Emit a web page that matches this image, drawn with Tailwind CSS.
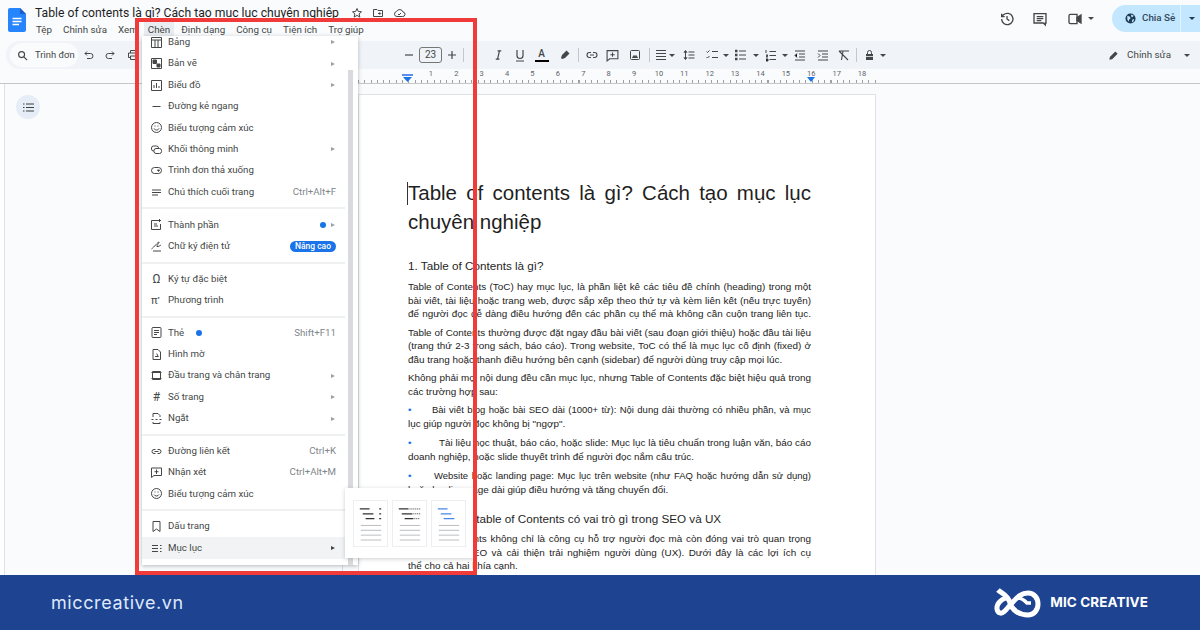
<!DOCTYPE html>
<html lang="vi">
<head>
<meta charset="utf-8">
<title>Table of contents</title>
<script src="https://cdn.jsdelivr.net/npm/@tailwindcss/browser@4"></script>
</head>
<body class="m-0">
<div class="relative w-[1200px] h-[630px] overflow-hidden flex flex-col bg-[#f9fbfd] font-['Roboto','Liberation_Sans',sans-serif] text-[#444746]">

  <!-- Header -->
  <div class="h-[41px] flex items-start shrink-0">
    <svg class="w-[18px] h-[24px] ml-[8px] mt-[8px] shrink-0" viewBox="0 0 18 24"><path d="M2 0h10l6 6v16a2 2 0 0 1-2 2H2a2 2 0 0 1-2-2V2a2 2 0 0 1 2-2z" fill="#2684fc"/><path d="M12 0l6 6h-6z" fill="#1a5fc4"/><path d="M4.500 10.500h9M4.500 13.500h9M4.500 16.500h6.500" stroke="#fff" stroke-width="1.300"/></svg>
    <div class="ml-[9px] mt-[4px]">
      <div class="flex items-center h-[18px]">
        <span class="text-[12.200px] leading-[18px] text-[#1f1f1f] whitespace-nowrap">Table of contents là gì? Cách tạo mục lục chuyên nghiệp</span>
        <svg class="w-[12px] h-[12px] ml-[12px]" viewBox="0 0 24 24" fill="none" stroke="#444746" stroke-width="2"><path d="M12 3l2.700 6 6.300.6-4.800 4.200 1.500 6.400L12 16.800 6.300 20.200l1.500-6.400L3 9.600 9.300 9z"/></svg>
        <svg class="w-[12px] h-[12px] ml-[9px]" viewBox="0 0 24 24" fill="none" stroke="#444746" stroke-width="2"><path d="M3 5h7l2 2h9v12H3zM12 13h5M15 10.500l2.500 2.500-2.500 2.500"/></svg>
        <svg class="w-[13px] h-[12px] ml-[9px]" viewBox="0 0 24 24" fill="none" stroke="#444746" stroke-width="2"><path d="M7 19a5 5 0 0 1-1-9.900A7 7 0 0 1 19 10a4.500 4.500 0 0 1-1 9zM9 14l2 2 4-4"/></svg>
      </div>
      <div class="flex text-[9.800px] leading-[14px] mt-[1px] whitespace-nowrap">
        <span class="ml-[1px]">Tệp</span>
        <span class="ml-[11px]">Chỉnh sửa</span>
        <span class="ml-[11px]">Xem</span>
        <span class="ml-[6px] px-[4px] -my-[2px] py-[2px] bg-[#e9ecf0]">Chèn</span>
        <span class="ml-[7px]">Định dạng</span>
        <span class="ml-[11px]">Công cụ</span>
        <span class="ml-[11px]">Tiện ích</span>
        <span class="ml-[11px]">Trợ giúp</span>
      </div>
    </div>
    <div class="ml-auto flex items-center mt-[5px] mr-0">
      <svg class="w-[16px] h-[16px]" viewBox="0 0 24 24" fill="none" stroke="#444746" stroke-width="2"><path d="M4 12a8.500 8.500 0 1 0 2.800-6.300L4 8.300M4 4v4.500h4.500M12 7.500V12l3.500 2.500"/></svg>
      <svg class="w-[16px] h-[16px] ml-[17px]" viewBox="0 0 24 24" fill="none" stroke="#444746" stroke-width="2"><path d="M3 4h18v14h-1v3l-3-3H3zM7 8.500h10M7 11.500h10M7 14.500h7"/></svg>
      <svg class="w-[16px] h-[16px] ml-[19px]" viewBox="0 0 24 24" fill="none" stroke="#444746" stroke-width="2"><path d="M3 7a2 2 0 0 1 2-2h10v14H5a2 2 0 0 1-2-2z"/><path d="M15 10l6-4v12l-6-4z" fill="#444746"/></svg>
      <span class="ml-[5px] border-x-[3px] border-t-[3px] border-x-transparent border-t-[#444746]"></span>
      <div class="ml-[18px] w-[88px] h-[27px] rounded-l-full bg-[#c2e7ff] flex items-center pl-[13px] text-[9.800px] font-medium text-[#33475b]">
        <svg class="w-[11px] h-[11px] mr-[6px]" viewBox="0 0 24 24"><circle cx="12" cy="12" r="11" fill="#1f3a52"/><path d="M5 6l6 2 1 4-3 2-1 5-3-5zM14 3l5 3-3 3-3-2zM16 14l4-1-2 6-3 1z" fill="#c2e7ff"/></svg>
        Chia Sẻ
        <span class="ml-auto w-px h-full bg-[#e3f3ff]"></span>
        <span class="ml-[8px] mr-[5px] border-x-[3px] border-t-[3px] border-x-transparent border-t-[#1f3a52]"></span>
      </div>
    </div>
  </div>

  <!-- Toolbar -->
  <div class="h-[28px] ml-[6px] shrink-0 flex items-center bg-[#f0f4f9] rounded-l-full text-[#444746]">
    <div class="w-[68px] h-[24px] ml-[4px] rounded-full bg-[#f9fbfd] flex items-center pl-[7px] text-[9.400px] whitespace-nowrap">
      <svg class="w-[11px] h-[11px] mr-[7px] shrink-0" viewBox="0 0 24 24" fill="none" stroke="#444746" stroke-width="2.500"><circle cx="10" cy="10" r="6.500"/><path d="M15 15l7 7"/></svg>
      Trình đơn
    </div>
    <svg class="w-[12px] h-[12px] ml-[5px]" viewBox="0 0 24 24" fill="none" stroke="#444746" stroke-width="2"><path d="M4 9h11a5 5 0 0 1 0 10H8M8 5L4 9l4 4"/></svg>
    <svg class="w-[12px] h-[12px] ml-[9px]" viewBox="0 0 24 24" fill="none" stroke="#444746" stroke-width="2"><path d="M20 9H9a5 5 0 0 0 0 10h7M16 5l4 4-4 4"/></svg>
    <svg class="w-[12px] h-[12px] ml-[11px]" viewBox="0 0 24 24" fill="none" stroke="#444746" stroke-width="2"><path d="M7 8V3h10v5M7 17H3V8h18v9h-4M7 14h10v7H7z"/></svg>
    <div class="ml-[265px] flex items-center">
      <svg class="w-[10px] h-[10px]" viewBox="0 0 10 10"><path d="M1 5h8" stroke="#444746" stroke-width="1.200"/></svg>
      <div class="w-[23px] h-[16px] ml-[5px] rounded-[3px] border border-[#747775] text-[10px] leading-[14px] text-center">23</div>
      <svg class="w-[10px] h-[10px] ml-[5px]" viewBox="0 0 10 10"><path d="M1 5h8M5 1v8" stroke="#444746" stroke-width="1.200"/></svg>
      <span class="ml-[6px] w-px h-[14px] bg-[#c7c7c7]"></span>
      <svg class="w-[11px] h-[12px] ml-[29px]" viewBox="0 0 24 24"><path d="M10 3h8M14 3L10 21M6 21h8" stroke="#444746" stroke-width="2.600" fill="none"/></svg>
      <svg class="w-[12px] h-[13px] ml-[9.500px]" viewBox="0 0 24 26" fill="none" stroke="#444746" stroke-width="2.400"><path d="M6 2v11a6 6 0 0 0 12 0V2M4 24h16"/></svg>
      <div class="w-[14px] h-[15px] ml-[9px] flex flex-col items-center text-[10px] leading-[11px] font-medium">A<span class="w-[14px] h-[2px] bg-black mt-[1px]"></span></div>
      <svg class="w-[12px] h-[12px] ml-[10px]" viewBox="0 0 24 24"><path d="M4 18l2-6L15 3l6 6-9 9-6 2z" fill="#444746"/></svg>
      <span class="ml-[7px] w-px h-[14px] bg-[#c7c7c7]"></span>
      <svg class="w-[12px] h-[12px] ml-[7px]" viewBox="0 0 24 24" fill="none" stroke="#444746" stroke-width="2.200"><path d="M10 7H7a5 5 0 0 0 0 10h3M14 7h3a5 5 0 0 1 0 10h-3M8 12h8"/></svg>
      <svg class="w-[13px] h-[13px] ml-[8.500px]" viewBox="0 0 24 24" fill="none" stroke="#444746" stroke-width="2"><path d="M2 3h20v15H7l-5 4zM12 6.500v8M8 10.500h8"/></svg>
      <svg class="w-[12px] h-[12px] ml-[9.500px]" viewBox="0 0 24 24" fill="none" stroke="#444746" stroke-width="2"><rect x="3" y="3" width="18" height="18" rx="2"/><path d="M7 17l3-4 2 2 2-2 3 4z" fill="#444746"/></svg>
      <span class="ml-[8px] w-px h-[14px] bg-[#c7c7c7]"></span>
      <svg class="w-[12px] h-[12px] ml-[5px]" viewBox="0 0 12 12" stroke="#444746" stroke-width="1"><path d="M1 1.500h10M1 4.500h10M1 7.500h10M1 10.500h10"/></svg>
      <span class="ml-[2px] border-x-[3px] border-t-[3px] border-x-transparent border-t-[#444746]"></span>
      <svg class="w-[12px] h-[12px] ml-[8px]" viewBox="0 0 12 12" stroke="#444746" stroke-width="1"><path d="M2.500 2v8M1 3.500l1.500-2 1.500 2M1 8.500l1.500 2 1.500-2M5.500 3h6M5.500 6h6M5.500 9h6"/></svg>
      <svg class="w-[12px] h-[12px] ml-[11px]" viewBox="0 0 12 12" stroke="#444746" stroke-width="1" fill="none"><path d="M.5 2.500l1 1 2-2M.5 8l1 1 2-2M6 2.500h6M6 8.500h6"/></svg>
      <span class="ml-[5px] border-x-[3px] border-t-[3px] border-x-transparent border-t-[#444746]"></span>
      <svg class="w-[11px] h-[12px] ml-[6.500px]" viewBox="0 0 11 12" stroke="#444746" stroke-width="1"><path d="M0 2h2.500M0 6h2.500M0 10h2.500" stroke-width="2.400"/><path d="M4 2h7M4 6h7M4 10h7"/></svg>
      <span class="ml-[6.500px] border-x-[3px] border-t-[3px] border-x-transparent border-t-[#444746]"></span>
      <svg class="w-[11px] h-[13px] ml-[6.500px]" viewBox="0 0 11 13" stroke="#444746" stroke-width="1"><path d="M1 1v3M1 6h2l-2 2h2M1 10h2v2H1M4.500 2.500H11M4.500 6.500H11M4.500 10.500H11"/></svg>
      <span class="ml-[5.500px] border-x-[3px] border-t-[3px] border-x-transparent border-t-[#444746]"></span>
      <svg class="w-[11px] h-[11px] ml-[6px]" viewBox="0 0 11 11" stroke="#444746" stroke-width="1"><path d="M1 1h10M5 4h6M5 7h6M1 10h10M3 3.500L1 5.500l2 2"/></svg>
      <svg class="w-[11px] h-[11px] ml-[12px]" viewBox="0 0 11 11" stroke="#444746" stroke-width="1"><path d="M1 1h10M5 4h6M5 7h6M1 10h10M1 3.500l2 2-2 2" fill="none"/></svg>
      <svg class="w-[11px] h-[11px] ml-[10px]" viewBox="0 0 11 11" stroke="#444746" stroke-width="1.100" fill="none"><path d="M1 1h10M5 1L3.500 10M1 1l9 9"/></svg>
      <span class="ml-[7.500px] w-px h-[14px] bg-[#c7c7c7]"></span>
      <svg class="w-[9px] h-[11px] ml-[7.500px]" viewBox="0 0 9 11"><path d="M1 4h7v6H1z" fill="#444746"/><path d="M2.500 4V2.500a2 2 0 0 1 4 0V4" stroke="#444746" fill="none"/><path d="M1 6.500h7" stroke="#f0f4f9" stroke-width=".8"/></svg>
      <span class="ml-[6.500px] border-x-[3px] border-t-[3px] border-x-transparent border-t-[#444746]"></span>
    </div>
    <div class="ml-auto flex items-center text-[9.800px] mr-[10px]">
      <svg class="w-[11px] h-[11px] mr-[8px]" viewBox="0 0 24 24"><path d="M3 21l1-6L16 3l5 5L9 20z" fill="#444746"/></svg>
      Chỉnh sửa
      <span class="ml-[13px] border-x-[3px] border-t-[3px] border-x-transparent border-t-[#444746]"></span>
    </div>
  </div>

  <!-- Ruler: ticks and numbers fill the strip from the page's left margin -->
  <div class="h-[15px] shrink-0 border-b border-[#c7c7c7] flex items-end pl-[358px] text-[7.500px] leading-[10px] text-[#5f6368]">
    <div class="relative w-[518px] h-[14px] flex bg-[repeating-linear-gradient(90deg,#9aa0a6_0,#9aa0a6_1px,transparent_1px,transparent_6.300px)] bg-[length:100%_3px] bg-bottom bg-no-repeat">
      <svg class="absolute left-[44px] top-[5px] w-[11px] h-[8px]" viewBox="0 0 11 8"><path d="M0 0h11v2H0z" fill="#5b8def"/><path d="M1 3h9L5.500 8z" fill="#1a73e8"/></svg>
      <svg class="absolute left-[449px] top-[5px] w-[8px] h-[8px]" viewBox="0 0 8 8"><path d="M0 3h8L4 8z" fill="#1a73e8"/></svg>
      <span class="w-[75px] text-right">1</span>
      <span class="w-[25.400px] text-right">2</span>
      <span class="w-[25.400px] text-right">3</span>
      <span class="w-[25.400px] text-right">4</span>
      <span class="w-[25.400px] text-right">5</span>
      <span class="w-[25.400px] text-right">6</span>
      <span class="w-[25.400px] text-right">7</span>
      <span class="w-[25.400px] text-right">8</span>
      <span class="w-[25.400px] text-right">9</span>
      <span class="w-[27px] text-right">10</span>
      <span class="w-[25.400px] text-right">11</span>
      <span class="w-[25.400px] text-right">12</span>
      <span class="w-[25.400px] text-right">13</span>
      <span class="w-[25.400px] text-right">14</span>
      <span class="w-[25.400px] text-right">15</span>
      <span class="w-[25.400px] text-right">16</span>
      <span class="w-[25.400px] text-right">17</span>
      <span class="w-[25.400px] text-right">18</span>
    </div>
  </div>

  <!-- Editor -->
  <div class="flex-1 min-h-0 flex bg-[#f9fbfd] overflow-hidden">
    <div class="w-[358px] shrink-0 flex">
      <div class="w-[5px] border-r border-[#dfe1e5] bg-white"></div>
      <div class="w-[24px] h-[24px] ml-[11px] mt-[11px] rounded-full bg-[#e7edf6] flex items-center justify-center">
        <svg class="w-[11px] h-[9px]" viewBox="0 0 11 9" stroke="#3c4043" stroke-width="1"><path d="M0 1h1.500M3 1h8M0 4.500h1.500M3 4.500h8M0 8h1.500M3 8h8"/></svg>
      </div>
    </div>
    <div class="w-[518px] h-[600px] mt-[10px] bg-white border border-[#dfe1e5] pl-[49px] pr-[64px] pt-[84px] font-['Liberation_Sans',Arial,sans-serif] text-[#222] text-[9.900px] leading-[13.500px]">
      <div class="relative text-[20.500px] leading-[28.500px] text-[#1f1f1f] [&>div]:[text-align-last:justify]">
        <span class="absolute -left-px top-[3px] w-px h-[23px] bg-[#333]"></span>
        <div>Table of contents là gì? Cách tạo mục lục</div>
        <p>chuyên nghiệp</p>
      </div>
      <h2 class="text-[11.700px] leading-[16px] mt-[22px] font-normal text-[#1f1f1f]">1. Table of Contents là gì?</h2>
      <div class="mt-[6px] [&>div]:[text-align-last:justify]">
        <div>Table of Contents (ToC) hay mục lục, là phần liệt kê các tiêu đề chính (heading) trong một</div>
        <div>bài viết, tài liệu hoặc trang web, được sắp xếp theo thứ tự và kèm liên kết (nếu trực tuyến)</div>
        <div>để người đọc dễ dàng điều hướng đến các phần cụ thể mà không cần cuộn trang liên tục.</div>
      </div>
      <div class="mt-[5px] [&>div]:[text-align-last:justify]">
        <div>Table of Contents thường được đặt ngay đầu bài viết (sau đoạn giới thiệu) hoặc đầu tài liệu</div>
        <div>(trang thứ 2-3 trong sách, báo cáo). Trong website, ToC có thể là mục lục cố định (fixed) ở</div>
        <p>đầu trang hoặc thanh điều hướng bên cạnh (sidebar) để người dùng truy cập mọi lúc.</p>
      </div>
      <div class="mt-[5px] [&>div]:[text-align-last:justify]">
        <div>Không phải mọi nội dung đều cần mục lục, nhưng Table of Contents đặc biệt hiệu quả trong</div>
        <p>các trường hợp sau:</p>
      </div>
      <div class="mt-[5px] [&>div]:[text-align-last:justify]">
        <div class="flex"><span class="w-[24px] shrink-0 text-[#1a73e8]">•</span><span class="flex-1 text-[9.500px] [text-align-last:justify]">Bài viết blog hoặc bài SEO dài (1000+ từ): Nội dung dài thường có nhiều phần, và mục</span></div>
        <p>lục giúp người đọc không bị "ngợp".</p>
      </div>
      <div class="mt-[6px] [&>div]:[text-align-last:justify]">
        <div class="flex"><span class="w-[31px] shrink-0 text-[#1a73e8]">•</span><span class="flex-1 [text-align-last:justify]">Tài liệu học thuật, báo cáo, hoặc slide: Mục lục là tiêu chuẩn trong luận văn, báo cáo</span></div>
        <p>doanh nghiệp, hoặc slide thuyết trình để người đọc nắm cấu trúc.</p>
      </div>
      <div class="mt-[6px] [&>div]:[text-align-last:justify]">
        <div class="flex"><span class="w-[26px] shrink-0 text-[#1a73e8]">•</span><span class="flex-1 text-[9.500px] [text-align-last:justify]">Website hoặc landing page: Mục lục trên website (như FAQ hoặc hướng dẫn sử dụng)</span></div>
        <p>hoặc landing page dài giúp điều hướng và tăng chuyển đổi.</p>
      </div>
      <h2 class="text-[11.700px] leading-[16px] mt-[15px] font-normal text-[#1f1f1f] whitespace-nowrap">2. Vì sao nói table of Contents có vai trò gì trong SEO và UX</h2>
      <div class="mt-[5px] [&>div]:[text-align-last:justify]">
        <div>Table of Contents không chỉ là công cụ hỗ trợ người đọc mà còn đóng vai trò quan trọng</div>
        <div>trong tối ưu SEO và cải thiện trải nghiệm người dùng (UX). Dưới đây là các lợi ích cụ</div>
        <p>thể cho cả hai khía cạnh.</p>
      </div>
    </div>
  </div>

  <!-- Footer -->
  <div class="h-[55px] shrink-0 bg-[#1d4391] flex items-center justify-between pl-[51px] pr-[52px] z-20">
    <span class="text-[18px] tracking-[0.6px] text-[#dfe9fb] font-['Inter',sans-serif]">miccreative.vn</span>
    <div class="flex items-center">
      <svg class="w-[47px] h-[30px]" viewBox="0 0 47 30" fill="none" stroke="#fff" stroke-width="5"><path d="M4 2c3 3 10 5 12 13 2 7 9 12 18 12 6 0 10-5 10-11S40 5 34 5c-8 0-12 6-18 12-4 5-7 9-10 8-3-1-4-5-2-9 2-3 6-6 9-6"/><path d="M24 10c3 0 6 2 9 5h4" stroke-width="3.600"/></svg>
      <span class="ml-[9px] text-[13.500px] font-bold tracking-[0.1px] text-white font-['Inter',sans-serif]">MIC CREATIVE</span>
    </div>
  </div>

  <!-- Insert menu (open dropdown over the editor) -->
  <div class="absolute left-[142px] top-[36px] w-[216px] h-[529px] bg-white shadow-[0_1px_4px_rgba(60,64,67,.35)] overflow-hidden z-10 text-[9.700px] text-[#444746] pr-[13px]">
    <span class="absolute left-[206px] top-[34px] w-[5px] h-[500px] bg-[#d9dadd]"></span>
    <div class="-mt-[4.500px]"></div>
    <div class="flex items-center h-[21.430px] pl-[9px] pr-[9px]"><svg class="w-[11px] h-[11px] mr-[6px]" viewBox="0 0 11 11" fill="none" stroke="#444746"><path d="M.5.5h10v10H.5zM.5 3h10M4 3v7.500M7 3v7.500"/></svg>Bảng<span class="ml-auto mr-[1px] border-y-[2.500px] border-l-[4px] border-y-transparent border-l-[#9aa0a6]"></span></div>
    <div class="flex items-center h-[21.430px] pl-[9px] pr-[9px]"><svg class="w-[11px] h-[11px] mr-[6px]" viewBox="0 0 11 11" fill="none" stroke="#444746"><path d="M.5.5h10v10H.5z"/><path d="M2 2h3.500v3.500H2zM6 6h3v3H6z" fill="#444746"/></svg>Bản vẽ<span class="ml-auto mr-[1px] border-y-[2.500px] border-l-[4px] border-y-transparent border-l-[#9aa0a6]"></span></div>
    <div class="flex items-center h-[21.430px] pl-[9px] pr-[9px]"><svg class="w-[11px] h-[11px] mr-[6px]" viewBox="0 0 11 11" fill="none" stroke="#444746"><path d="M.5.5h10v10H.5zM3 8V5M5.500 8V3M8 8V6"/></svg>Biểu đồ<span class="ml-auto mr-[1px] border-y-[2.500px] border-l-[4px] border-y-transparent border-l-[#9aa0a6]"></span></div>
    <div class="flex items-center h-[21.430px] pl-[9px] pr-[9px]"><svg class="w-[11px] h-[11px] mr-[6px]" viewBox="0 0 11 11" fill="none" stroke="#444746"><path d="M1.500 5.500h8"/></svg>Đường kẻ ngang</div>
    <div class="flex items-center h-[21.430px] pl-[9px] pr-[9px]"><svg class="w-[11px] h-[11px] mr-[6px]" viewBox="0 0 11 11" fill="none" stroke="#444746"><circle cx="5.500" cy="5.500" r="5"/><path d="M3 6.500c1 2 4 2 5 0M3.500 4h1M6.500 4h1"/></svg>Biểu tượng cảm xúc</div>
    <div class="flex items-center h-[21.430px] pl-[9px] pr-[9px]"><svg class="w-[11px] h-[11px] mr-[6px]" viewBox="0 0 11 11" fill="none" stroke="#444746"><rect x=".5" y="2" width="7" height="5" rx="2"/><rect x="3" y="4.500" width="7.500" height="5" rx="2" fill="#fff"/></svg>Khối thông minh<span class="ml-auto mr-[1px] border-y-[2.500px] border-l-[4px] border-y-transparent border-l-[#9aa0a6]"></span></div>
    <div class="flex items-center h-[21.430px] pl-[9px] pr-[9px]"><svg class="w-[11px] h-[11px] mr-[6px]" viewBox="0 0 11 11" fill="none" stroke="#444746"><rect x=".5" y="2.500" width="10" height="6" rx="3"/><path d="M6.500 5h2L7.500 6.500z" fill="#444746"/></svg>Trình đơn thả xuống</div>
    <div class="flex items-center h-[21.430px] pl-[9px] pr-[9px]"><svg class="w-[11px] h-[11px] mr-[6px]" viewBox="0 0 11 11" fill="none" stroke="#444746"><path d="M1 3h9M1 5.500h9M1 8h6"/></svg>Chú thích cuối trang<span class="ml-auto text-[#80868b]">Ctrl+Alt+F</span></div>
    <div class="h-[2px] my-[4.600px] bg-[#eef0f2]"></div>
    <div class="flex items-center h-[21.430px] pl-[9px] pr-[9px]"><svg class="w-[11px] h-[11px] mr-[6px]" viewBox="0 0 11 11" fill="none" stroke="#444746"><path d="M7 1.500H.5v9h9V5M3 5h3M3 7h4M8.500 0v3M7 1.500h3"/></svg>Thành phần<span class="ml-auto w-[6px] h-[6px] rounded-full bg-[#1a73e8] mr-[5px]"></span><span class="mr-[1px] border-y-[2.500px] border-l-[4px] border-y-transparent border-l-[#9aa0a6]"></span></div>
    <div class="flex items-center h-[21.430px] pl-[9px] pr-[9px]"><svg class="w-[11px] h-[11px] mr-[6px]" viewBox="0 0 11 11" fill="none" stroke="#444746"><path d="M.5 8C3 6 7 1 8 1S5 5 6 5.500 10 4 10 4M2 10h8"/></svg>Chữ ký điện tử<span class="ml-auto h-[11px] px-[5px] rounded-full bg-[#1a73e8] text-white text-[8.500px] leading-[11px] font-medium">Nâng cao</span></div>
    <div class="h-[2px] my-[4.600px] bg-[#eef0f2]"></div>
    <div class="flex items-center h-[21.430px] pl-[9px] pr-[9px]"><span class="w-[11px] mr-[6px] text-[12px] leading-none text-center">Ω</span>Ký tự đặc biệt</div>
    <div class="flex items-center h-[21.430px] pl-[9px] pr-[9px]"><span class="w-[11px] mr-[6px] text-[11px] leading-none whitespace-nowrap">π<sup class="text-[6px]">²</sup></span>Phương trình</div>
    <div class="h-[2px] my-[4.600px] bg-[#eef0f2]"></div>
    <div class="flex items-center h-[21.430px] pl-[9px] pr-[9px]"><svg class="w-[11px] h-[11px] mr-[6px]" viewBox="0 0 11 11" fill="none" stroke="#444746"><rect x="1" y=".5" width="9" height="10" rx="1"/><path d="M3 3.500h5M3 5.500h5M3 7.500h3"/></svg>Thẻ<span class="ml-[12px] w-[6px] h-[6px] rounded-full bg-[#1a73e8]"></span><span class="ml-auto text-[#80868b]">Shift+F11</span></div>
    <div class="flex items-center h-[21.430px] pl-[9px] pr-[9px]"><svg class="w-[11px] h-[11px] mr-[6px]" viewBox="0 0 11 11" fill="none" stroke="#444746"><path d="M2 .5h5l2.500 2.500v7.500H2zM4 7.500h3.500M5.700 4.500l1.500 3"/></svg>Hình mờ</div>
    <div class="flex items-center h-[21.430px] pl-[9px] pr-[9px]"><svg class="w-[11px] h-[11px] mr-[6px]" viewBox="0 0 11 11" fill="none" stroke="#444746"><path d="M1.500 1.500h8v8h-8zM.5 2.500h10M.5 8.500h10"/></svg>Đầu trang và chân trang<span class="ml-auto mr-[1px] border-y-[2.500px] border-l-[4px] border-y-transparent border-l-[#9aa0a6]"></span></div>
    <div class="flex items-center h-[21.430px] pl-[9px] pr-[9px]"><span class="w-[11px] mr-[6px] text-[12px] leading-none text-center">#</span>Số trang<span class="ml-auto mr-[1px] border-y-[2.500px] border-l-[4px] border-y-transparent border-l-[#9aa0a6]"></span></div>
    <div class="flex items-center h-[21.430px] pl-[9px] pr-[9px]"><svg class="w-[11px] h-[11px] mr-[6px]" viewBox="0 0 11 11" fill="none" stroke="#444746"><path d="M2 4V.5h5L9 2.500V4M2 9v1.500h7V9M.5 6.500h2M4.500 6.500h2M8.500 6.500h2"/></svg>Ngắt<span class="ml-auto mr-[1px] border-y-[2.500px] border-l-[4px] border-y-transparent border-l-[#9aa0a6]"></span></div>
    <div class="h-[2px] my-[4.600px] bg-[#eef0f2]"></div>
    <div class="flex items-center h-[21.430px] pl-[9px] pr-[9px]"><svg class="w-[11px] h-[11px] mr-[6px]" viewBox="0 0 11 11" fill="none" stroke="#444746"><path d="M4.500 3.500H3a2 2 0 0 0 0 4h1.500M6.500 3.500H8a2 2 0 0 1 0 4H6.500M3.500 5.500h4"/></svg>Đường liên kết<span class="ml-auto text-[#80868b]">Ctrl+K</span></div>
    <div class="flex items-center h-[21.430px] pl-[9px] pr-[9px]"><svg class="w-[11px] h-[11px] mr-[6px]" viewBox="0 0 11 11" fill="none" stroke="#444746"><path d="M.5 1h10v7.500H3L.5 10.500zM5.500 2.500v4.500M3.500 4.700h4"/></svg>Nhận xét<span class="ml-auto text-[#80868b]">Ctrl+Alt+M</span></div>
    <div class="flex items-center h-[21.430px] pl-[9px] pr-[9px]"><svg class="w-[11px] h-[11px] mr-[6px]" viewBox="0 0 11 11" fill="none" stroke="#444746"><circle cx="5.500" cy="5.500" r="5"/><path d="M3 6.500c1 2 4 2 5 0M3.500 4h1M6.500 4h1"/></svg>Biểu tượng cảm xúc</div>
    <div class="h-[2px] my-[4.600px] bg-[#eef0f2]"></div>
    <div class="flex items-center h-[21.430px] pl-[9px] pr-[9px]"><svg class="w-[11px] h-[11px] mr-[6px]" viewBox="0 0 11 11" fill="none" stroke="#444746"><path d="M2 .5h7v10L5.500 8 2 10.500z"/></svg>Dấu trang</div>
    <div class="flex items-center h-[21.430px] pl-[9px] pr-[9px] bg-[#f1f3f4]"><svg class="w-[11px] h-[11px] mr-[6px]" viewBox="0 0 11 11" fill="none" stroke="#444746"><path d="M1 2.500h6M1 5.500h6M1 8.500h6M9 2.500h1.500M9 5.500h1.500M9 8.500h1.500"/></svg>Mục lục<span class="ml-auto mr-[1px] border-y-[2.500px] border-l-[4px] border-y-transparent border-l-[#444746]"></span></div>
  </div>

  <!-- Thin guide line under the menu -->
  <span class="absolute left-[342px] top-[565px] w-px h-[10px] bg-[#dadce0]"></span>

  <!-- Table of contents submenu -->
  <div class="absolute left-[345px] top-[488px] w-[129px] h-[70px] bg-white shadow-[0_1px_4px_rgba(60,64,67,.25)] z-10 flex gap-[4px] pl-[8px] pt-[12px]">
    <svg class="w-[35px] h-[47px] border border-[#eceef0]" viewBox="0 0 34 46" fill="none" stroke="#9aa0a6"><path d="M6 8h10M9 13h11M12 18h9" stroke="#333" stroke-width="1.200"/><path d="M26 8h2M26 13h2M26 18h2" stroke="#333" stroke-width="1.200"/><path d="M7 25h21M7 30h21M7 35h21M7 40h21" stroke-width=".7"/></svg>
    <svg class="w-[35px] h-[47px] border border-[#eceef0]" viewBox="0 0 34 46" fill="none" stroke="#9aa0a6"><path d="M6 8h10M9 13h11M12 18h9" stroke="#333" stroke-width="1.200"/><path d="M17 8h11M21 13h7M22 18h6" stroke="#333" stroke-dasharray="1 1"/><path d="M7 25h21M7 30h21M7 35h21M7 40h21" stroke-width=".7"/></svg>
    <svg class="w-[35px] h-[47px] border border-[#eceef0]" viewBox="0 0 34 46" fill="none" stroke="#9aa0a6"><path d="M6 8h10M9 13h11M12 18h11" stroke="#4a86e8" stroke-width="1.200"/><path d="M7 25h21M7 30h21M7 35h21M7 40h21" stroke-width=".7"/></svg>
  </div>

  <!-- Red highlight frame -->
  <div class="absolute left-[135px] top-[18px] w-[342px] h-[557px] border-[4px] border-[#f13a3a] z-10 pointer-events-none"></div>
</div>
</body>
</html>
